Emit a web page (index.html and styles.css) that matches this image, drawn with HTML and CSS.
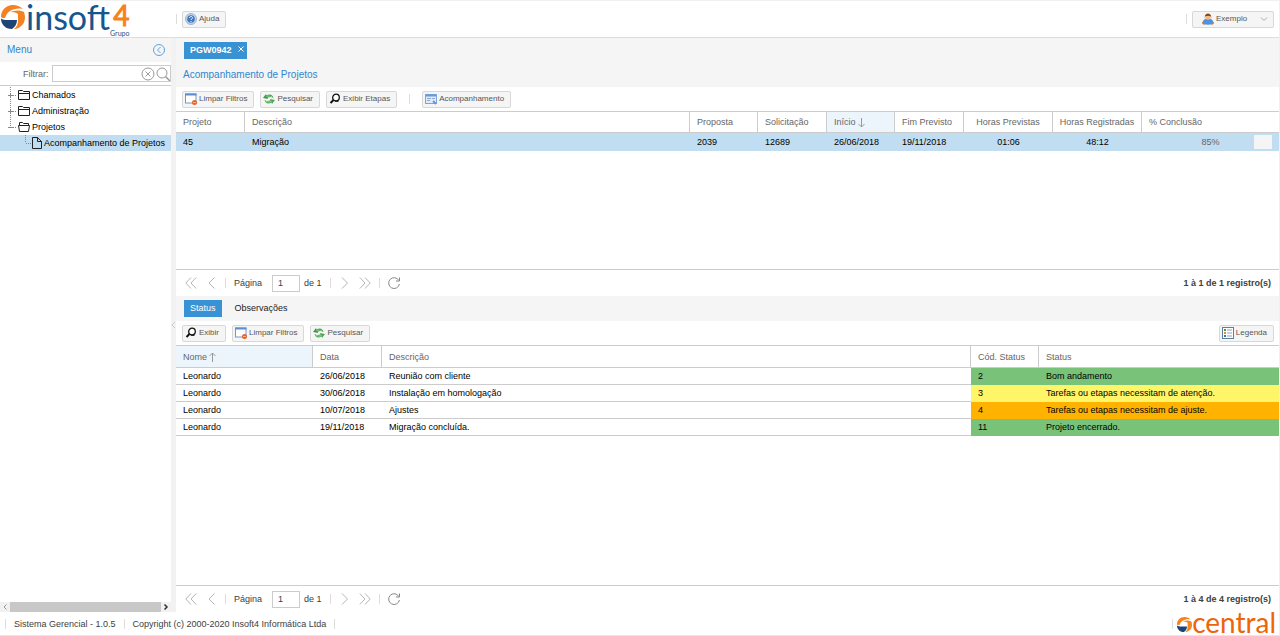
FILE: index.html
```html
<!DOCTYPE html>
<html lang="pt-BR">

<head>
    <meta charset="UTF-8">
    <meta name="viewport" content="width=device-width, initial-scale=1.0">
    <title>Sistema Gerencial</title>
    <link rel="stylesheet" href="styles.css">
</head>

<body>
    <!-- icons -->
    <svg class="sprite" aria-hidden="true">
        <symbol id="ball" viewBox="0 0 24 24">
            <path d="M0 12C0 5 5 0 12 0c4 0 8 2 10 4-5-1-10 0-13 2-3 2-4 4-5 7-2 0-3 0-4-1z" fill="#f58220" />
            <path d="M9 7c5-2 10-2 14 0 2 6 1 12-4 15-2 1.500-4 2-6 2 3-2 4-5 4-9V9C14 7 12 7 9 7z" fill="#f58220" />
            <path d="M0 13.500c1 1 3 1 4 1.500h12c0 4-2 7-5 9C4 24 0 19 0 13.500z" fill="#1c4477" />
        </symbol>
        <symbol id="help" viewBox="0 0 12 12">
            <circle cx="6" cy="6" r="5.500" fill="#c5d6ea" stroke="#9bb5d5" />
            <circle cx="6" cy="6" r="3.800" fill="#3f78bd" />
            <path d="M4.500 5c0-2 3-2 3-.2C7.500 6 6 5.800 6 7M6 8v1" fill="none" stroke="#fff" />
        </symbol>
        <symbol id="user" viewBox="0 0 12 12">
            <path d="M1 11c-1-3 1-5 3-5h4c2 0 4 2 3 5-3 1-7 1-10 0z" fill="#4d94e0" />
            <path d="M.5 9.500l2 1.500H1zM11.500 9.500l-2 1.500H11z" fill="#e59a52" stroke="#c97a35" />
            <circle cx="6" cy="4" r="2.800" fill="#f1b98a" />
            <path d="M2.800 5C2-1 10-1 9.200 5L8.500 3h-5z" fill="#8a4b1c" />
        </symbol>
        <symbol id="clear" viewBox="0 0 12 12">
            <rect x=".5" y="1" width="10.500" height="9" fill="#fff" stroke="#6b9bd6" />
            <path d="M0 1.500h11.500" stroke="#5b8fd2" stroke-width="2" />
            <circle cx="9.500" cy="9.500" r="2.500" fill="#e3662a" />
            <path d="M8 9.500h3" stroke="#fbd0b0" stroke-width=".7" />
        </symbol>
        <symbol id="refresh" viewBox="0 0 12 12">
            <path d="M0 5l3-4 .5 1.500C7 .5 9.500 1.500 10.500 5 8.500 3.800 6.500 3.800 4.500 4.800L5 6z" fill="#3f9a45" />
            <path d="M12 7l-3 4-.5-1.500C5 11.500 2.500 10.500 1.500 7c2 1.200 4 1.200 6 .2L7 6z" fill="#4fa855" />
            <path d="M3.500 3.500c2-.8 4-.6 5.500.2M8.500 8.500c-2 .8-4 .6-5.500-.2" fill="none" stroke="#a6dba6" stroke-width=".8" />
        </symbol>
        <symbol id="find" viewBox="0 0 12 12">
            <circle cx="7" cy="4.500" r="3.300" fill="#fff" stroke="#111" stroke-width="1.300" />
            <path d="M4.500 7L1.500 10" stroke="#111" stroke-width="2" />
            <path d="M6 8.300h3.500" stroke="#111" />
        </symbol>
        <symbol id="form" viewBox="0 0 12 12">
            <rect x=".5" y="1.500" width="11" height="9" fill="#dfeafa" stroke="#7fa5dc" />
            <path d="M1 2.500h10" stroke="#6b97d8" stroke-width="2" />
            <path d="M2 5.500h4M2 7.500h3M7 5.500h3" stroke="#8aa8d0" />
            <path d="M8 8l3 3" stroke="#6b97d8" stroke-width="2" />
        </symbol>
        <symbol id="legend" viewBox="0 0 12 12">
            <rect x=".5" y=".5" width="11" height="11" fill="#fff" stroke="#5d7f9e" />
            <path d="M5 3h5M5 6h5M5 9h5" stroke="#8fa3b5" />
            <path d="M2 3h2" stroke="#3d9a50" stroke-width="2" />
            <path d="M2 6h2" stroke="#e08b2d" stroke-width="2" />
            <path d="M2 9h2" stroke="#3c6fb5" stroke-width="2" />
        </symbol>
        <symbol id="folder" viewBox="0 0 12 10">
            <path d="M.5 9.500v-9h4l1 1h6v8zM.5 3.500h11" fill="none" stroke="#222" />
        </symbol>
        <symbol id="folder-open" viewBox="0 0 12 10">
            <path d="M1.500 3V.5h3l1 1h5V3M.5 3.500h11l-1 6h-9z" fill="none" stroke="#222" />
        </symbol>
        <symbol id="file" viewBox="0 0 10 12">
            <path d="M.5.5h5l4 4v7h-9zM5.500.5v4h4" fill="none" stroke="#222" />
        </symbol>
        <symbol id="first" viewBox="0 0 12 12">
            <path d="M6 .5L.8 6 6 11.500M11.200.5L6 6l5.200 5.500" fill="none" stroke="#b5b5b5" />
        </symbol>
        <symbol id="prev" viewBox="0 0 12 12">
            <path d="M9.500 .5L4 6l5.500 5.500" fill="none" stroke="#b5b5b5" />
        </symbol>
        <symbol id="next" viewBox="0 0 12 12">
            <path d="M3 .5L8.500 6 3 11.500" fill="none" stroke="#b5b5b5" />
        </symbol>
        <symbol id="last" viewBox="0 0 12 12">
            <path d="M.8.5L6 6 .8 11.500M6 .5L11.200 6 6 11.500" fill="none" stroke="#b5b5b5" />
        </symbol>
        <symbol id="reload" viewBox="0 0 12 12">
            <path d="M10.800 3.500A5.400 5.400 0 1 0 11.400 7M11.500.5v3.500H8" fill="none" stroke="#888" />
        </symbol>
    </svg>

    <header class="topbar">
        <div class="logo">
            <svg class="logo-ball"><use href="#ball" /></svg>
            <span class="logo-name">insoft</span>
            <div class="logo-end">
                <span class="logo-four">4</span>
                <span class="logo-group">Grupo</span>
            </div>
        </div>
        <i class="sep"></i>
        <button class="btn" type="button"><svg class="icon"><use href="#help" /></svg>Ajuda</button>
        <i class="sep push"></i>
        <button class="btn btn-user" type="button">
            <svg class="icon"><use href="#user" /></svg>Exemplo
            <svg class="caret" viewBox="0 0 8 8"><path d="M1 2.500l3 3 3-3" fill="none" stroke="#aaa" /></svg>
        </button>
    </header>

    <div class="main">
        <aside class="sidebar">
            <div class="side-head">
                <h2>Menu</h2>
                <button class="collapse" type="button" aria-label="Recolher">
                    <svg viewBox="0 0 12 12"><circle cx="6" cy="6" r="5.500" fill="none" stroke="#5fa2dd" /><path d="M7.500 3L4.500 6l3 3" fill="none" stroke="#5fa2dd" /></svg>
                </button>
            </div>
            <div class="filter">
                <label for="filter">Filtrar:</label>
                <div class="filter-box">
                    <input id="filter" type="text">
                    <svg viewBox="0 0 14 14"><circle cx="7" cy="7" r="6" fill="none" stroke="#999" /><path d="M4.500 4.500l5 5M9.500 4.500l-5 5" stroke="#999" /></svg>
                    <svg viewBox="0 0 14 14"><circle cx="6" cy="6" r="5" fill="none" stroke="#999" /><path d="M9.500 9.500L14 14" stroke="#999" stroke-width="1.500" /></svg>
                </div>
            </div>
            <ul class="tree">
                <li><svg class="branch" viewBox="0 0 12 16"><path d="M5.500 0v16M6 8.500h6" stroke-dasharray="1 1" /><path d="M3 8.500h5M5.500 6v5" /></svg><svg class="folder"><use href="#folder" /></svg>Chamados</li>
                <li><svg class="branch" viewBox="0 0 12 16"><path d="M5.500 0v16M6 8.500h6" stroke-dasharray="1 1" /><path d="M3 8.500h5M5.500 6v5" /></svg><svg class="folder"><use href="#folder" /></svg>Administração</li>
                <li><svg class="branch" viewBox="0 0 12 16"><path d="M5.500 0v8M6 8.500h6" stroke-dasharray="1 1" /><path d="M3 8.500h5" /></svg><svg class="folder"><use href="#folder-open" /></svg>Projetos</li>
                <li class="child selected"><svg class="branch" viewBox="0 0 12 16"><path d="M5.500 0v8M6 8.500h6" stroke-dasharray="1 1" /></svg><svg class="file"><use href="#file" /></svg>Acompanhamento de Projetos</li>
            </ul>
            <div class="hscroll">
                <svg viewBox="0 0 10 10"><path d="M6.500 2.500L4 5l2.500 2.500" fill="none" stroke="#999" /></svg>
                <div class="thumb"></div>
                <svg viewBox="0 0 10 10"><path d="M3.500 2.500L6 5 3.500 7.500" fill="none" stroke="#333" stroke-width="1.500" /></svg>
            </div>
        </aside>

        <div class="splitter">
            <svg viewBox="0 0 5 8"><path d="M4 1L1 4l3 3" fill="none" stroke="#ccc" /></svg>
        </div>

        <main class="content">
            <section class="panel panel-top">
                <div class="tabs">
                    <button class="tab active closable" type="button">PGW0942
                        <svg viewBox="0 0 6 6"><path d="M.5.5l5 5M5.500.5l-5 5" stroke="#fff" /></svg>
                    </button>
                </div>
                <h1 class="title">Acompanhamento de Projetos</h1>
                <div class="toolbar">
                    <button class="btn" type="button"><svg class="icon"><use href="#clear" /></svg>Limpar Filtros</button>
                    <button class="btn" type="button"><svg class="icon"><use href="#refresh" /></svg>Pesquisar</button>
                    <button class="btn" type="button"><svg class="icon"><use href="#find" /></svg>Exibir Etapas</button>
                    <i class="sep wide"></i>
                    <button class="btn" type="button"><svg class="icon"><use href="#form" /></svg>Acompanhamento</button>
                </div>
                <div class="grid-wrap">
                    <table class="grid">
                        <colgroup>
                            <col class="c-md">
                            <col>
                            <col class="c-sm">
                            <col class="c-md">
                            <col class="c-sm">
                            <col class="c-md">
                            <col class="c-lg">
                            <col class="c-lg">
                            <col class="c-xl">
                        </colgroup>
                        <thead>
                            <tr>
                                <th>Projeto</th>
                                <th>Descrição</th>
                                <th>Proposta</th>
                                <th>Solicitação</th>
                                <th class="sorted">Início<svg viewBox="0 0 7 10"><path d="M3.500 0v9M.5 6l3 3 3-3" fill="none" stroke="#999" /></svg></th>
                                <th>Fim Previsto</th>
                                <th class="center">Horas Previstas</th>
                                <th class="center">Horas Registradas</th>
                                <th>% Conclusão</th>
                            </tr>
                        </thead>
                        <tbody>
                            <tr class="selected">
                                <td>45</td>
                                <td>Migração</td>
                                <td>2039</td>
                                <td>12689</td>
                                <td>26/06/2018</td>
                                <td>19/11/2018</td>
                                <td class="center">01:06</td>
                                <td class="center">48:12</td>
                                <td>
                                    <div class="progress">
                                        <div class="progress-bar" style="width: 85%"></div>
                                        <span class="progress-text">85%</span>
                                    </div>
                                </td>
                            </tr>
                        </tbody>
                    </table>
                </div>
                <div class="paging">
                    <button type="button" aria-label="Primeira"><svg><use href="#first" /></svg></button>
                    <button type="button" aria-label="Anterior"><svg><use href="#prev" /></svg></button>
                    <i class="sep"></i>
                    <label for="page1">Página</label>
                    <input id="page1" type="text" value="1">
                    <span>de 1</span>
                    <i class="sep"></i>
                    <button type="button" aria-label="Próxima"><svg><use href="#next" /></svg></button>
                    <button type="button" aria-label="Última"><svg><use href="#last" /></svg></button>
                    <i class="sep"></i>
                    <button type="button" aria-label="Atualizar"><svg><use href="#reload" /></svg></button>
                    <strong class="count">1 à 1 de 1 registro(s)</strong>
                </div>
            </section>

            <section class="panel panel-bottom">
                <div class="tabs">
                    <button class="tab active" type="button">Status</button>
                    <button class="tab" type="button">Observações</button>
                </div>
                <div class="toolbar">
                    <button class="btn" type="button"><svg class="icon"><use href="#find" /></svg>Exibir</button>
                    <button class="btn" type="button"><svg class="icon"><use href="#clear" /></svg>Limpar Filtros</button>
                    <button class="btn" type="button"><svg class="icon"><use href="#refresh" /></svg>Pesquisar</button>
                    <button class="btn push" type="button"><svg class="icon"><use href="#legend" /></svg>Legenda</button>
                </div>
                <div class="grid-wrap">
                    <table class="grid lines">
                        <colgroup>
                            <col class="c-xl">
                            <col class="c-md">
                            <col>
                            <col class="c-sm">
                            <col class="c-status">
                        </colgroup>
                        <thead>
                            <tr>
                                <th class="sorted">Nome<svg viewBox="0 0 7 10"><path d="M3.500 10V1M.5 4l3-3 3 3" fill="none" stroke="#999" /></svg></th>
                                <th>Data</th>
                                <th>Descrição</th>
                                <th>Cód. Status</th>
                                <th>Status</th>
                            </tr>
                        </thead>
                        <tbody>
                            <tr>
                                <td>Leonardo</td>
                                <td>26/06/2018</td>
                                <td>Reunião com cliente</td>
                                <td class="green">2</td>
                                <td class="green">Bom andamento</td>
                            </tr>
                            <tr>
                                <td>Leonardo</td>
                                <td>30/06/2018</td>
                                <td>Instalação em homologação</td>
                                <td class="yellow">3</td>
                                <td class="yellow">Tarefas ou etapas necessitam de atenção.</td>
                            </tr>
                            <tr>
                                <td>Leonardo</td>
                                <td>10/07/2018</td>
                                <td>Ajustes</td>
                                <td class="orange">4</td>
                                <td class="orange">Tarefas ou etapas necessitam de ajuste.</td>
                            </tr>
                            <tr>
                                <td>Leonardo</td>
                                <td>19/11/2018</td>
                                <td>Migração concluída.</td>
                                <td class="green">11</td>
                                <td class="green">Projeto encerrado.</td>
                            </tr>
                        </tbody>
                    </table>
                </div>
                <div class="paging">
                    <button type="button" aria-label="Primeira"><svg><use href="#first" /></svg></button>
                    <button type="button" aria-label="Anterior"><svg><use href="#prev" /></svg></button>
                    <i class="sep"></i>
                    <label for="page2">Página</label>
                    <input id="page2" type="text" value="1">
                    <span>de 1</span>
                    <i class="sep"></i>
                    <button type="button" aria-label="Próxima"><svg><use href="#next" /></svg></button>
                    <button type="button" aria-label="Última"><svg><use href="#last" /></svg></button>
                    <i class="sep"></i>
                    <button type="button" aria-label="Atualizar"><svg><use href="#reload" /></svg></button>
                    <strong class="count">1 à 4 de 4 registro(s)</strong>
                </div>
            </section>
        </main>
    </div>

    <footer class="footer">
        <i class="sep"></i>
        <span>Sistema Gerencial - 1.0.5</span>
        <i class="sep"></i>
        <span>Copyright (c) 2000-2020 Insoft4 Informática Ltda</span>
        <i class="sep"></i>
        <i class="sep push"></i>
        <div class="central">
            <svg><use href="#ball" /></svg>
            <span>central</span>
        </div>
    </footer>
</body>

</html>
```

FILE: styles.css
```css
* {
    box-sizing: border-box;
}

body {
    margin: 0;
    height: 100vh;
    display: flex;
    flex-direction: column;
    font: 9px/12px "Liberation Sans", Arial, sans-serif;
    color: #404040;
    background: #fff;
    border-top: 1px solid #f0f0f0;
    border-right: 1px solid #f0f0f0;
    border-bottom: 1px solid #e8e8e8;
}

button,
input {
    font: inherit;
    color: inherit;
}

button {
    border: 0;
    padding: 0;
    background: none;
    cursor: pointer;
}

svg {
    display: block;
    flex: none;
}

.sprite {
    position: absolute;
    width: 0;
    height: 0;
}

.sep {
    width: 1px;
    height: 10px;
    background: #ddd;
}

.push {
    margin-left: auto;
}

.btn {
    display: flex;
    align-items: center;
    height: 17px;
    padding: 0 6px 0 2px;
    border: 1px solid #d8d8d8;
    border-radius: 2px;
    background: #f5f5f5;
    color: #555;
    font-size: 8px;
    white-space: nowrap;
}

.icon {
    width: 12px;
    height: 12px;
    margin-right: 2px;
}

/* top bar */
.topbar {
    display: flex;
    align-items: center;
    flex: none;
    height: 37px;
    padding-right: 5px;
    border-bottom: 1px solid #ddd;
}

.topbar .sep + .btn {
    margin-left: 5px;
}

.logo {
    display: flex;
    width: 176px;
    height: 36px;
    font-family: Lato, sans-serif;
    color: #17568c;
}

.logo-ball {
    width: 24px;
    height: 24px;
    margin: 4px 1px 0;
}

.logo-name {
    font-size: 34px;
    line-height: 32px;
}

.logo-end {
    display: flex;
    flex-direction: column;
    align-items: flex-end;
}

.logo-four {
    font-size: 28px;
    line-height: 28px;
    color: #f58220;
    -webkit-text-stroke: 1px #f58220;
}

.logo-group {
    font-size: 7px;
    line-height: 8px;
}

.btn-user {
    width: 82px;
    padding: 0 5px 0 9px;
}

.caret {
    width: 8px;
    height: 8px;
    margin-left: auto;
}

/* side menu */
.main {
    display: flex;
    flex: 1;
    min-height: 0;
}

.sidebar {
    display: flex;
    flex-direction: column;
    width: 171px;
    flex: none;
}

.side-head {
    display: flex;
    align-items: center;
    justify-content: space-between;
    height: 24px;
    padding: 0 6px 0 7px;
    background: #f5f5f5;
}

.side-head h2,
.title {
    margin: 0;
    font-size: 10px;
    font-weight: normal;
    color: #2f86cf;
}

.collapse svg {
    width: 12px;
    height: 12px;
}

.filter {
    display: flex;
    align-items: center;
    height: 24px;
    padding-left: 23px;
    border-bottom: 1px solid #ccc;
    color: #666;
}

.filter-box {
    display: flex;
    align-items: center;
    flex: 1;
    min-width: 0;
    height: 17px;
    margin-left: 3px;
    border: 1px solid #ccc;
}

.filter-box input {
    flex: 1;
    min-width: 0;
    height: 15px;
    padding: 0 3px;
    border: 0;
}

.filter-box svg {
    width: 14px;
    height: 14px;
    margin-left: 1px;
}

.tree {
    flex: 1;
    margin: 0;
    padding: 1px 0 0;
    list-style: none;
    color: #000;
}

.tree li {
    display: flex;
    align-items: center;
    height: 16px;
    padding-left: 5px;
    white-space: nowrap;
}

.tree .child {
    padding-left: 20px;
}

.tree .selected {
    background: #c1ddf1;
}

.branch {
    width: 12px;
    height: 16px;
    fill: none;
    stroke: #888;
}

.folder {
    width: 12px;
    height: 10px;
    margin: 0 2px 0 1px;
}

.file {
    width: 10px;
    height: 12px;
    margin-right: 2px;
}

.hscroll {
    display: flex;
    align-items: center;
    height: 10px;
    background: #f1f1f1;
}

.hscroll svg {
    width: 10px;
    height: 10px;
}

.thumb {
    flex: 1;
    height: 10px;
    background: #c8c8c8;
}

.splitter {
    display: flex;
    align-items: center;
    width: 5px;
    flex: none;
    background: #f2f2f2;
}

.splitter svg {
    width: 5px;
    height: 8px;
}

/* content */
.content {
    display: flex;
    flex-direction: column;
    flex: 1;
    min-width: 0;
}

.panel {
    display: flex;
    flex-direction: column;
    min-height: 0;
}

.panel-top {
    flex: 45;
}

.panel-bottom {
    flex: 55;
}

.tabs {
    display: flex;
    align-items: center;
    gap: 7px;
    flex: none;
    height: 25px;
    padding-left: 8px;
    background: #f5f5f5;
}

.tab {
    display: flex;
    height: 17px;
    padding: 0 6px;
    line-height: 17px;
    color: #222;
}

.tab.active {
    background: #3892d4;
    color: #fff;
    font-weight: bold;
}

.panel-bottom .tab {
    font-weight: normal;
}

.closable {
    padding-right: 3px;
}

.closable svg {
    width: 6px;
    height: 6px;
    margin: 4px 0 0 6px;
}

.title {
    height: 24px;
    padding-left: 7px;
    line-height: 24px;
    background: #f5f5f5;
}

.toolbar {
    display: flex;
    align-items: center;
    gap: 6px;
    flex: none;
    height: 24px;
    padding: 0 5px 0 6px;
}

.sep.wide {
    margin: 0 6px;
}

.grid-wrap {
    flex: 1;
    min-height: 0;
    border-top: 1px solid #ccc;
    border-bottom: 1px solid #ccc;
}

.grid {
    width: 100%;
    table-layout: fixed;
    border-collapse: separate;
    border-spacing: 0;
}

.c-sm {
    width: 68px;
}

.c-md {
    width: 69px;
}

.c-lg {
    width: 89px;
}

.c-xl {
    width: 137px;
}

.c-status {
    width: 240px;
}

.grid th,
.grid td {
    padding: 0 7px;
    text-align: left;
    white-space: nowrap;
}

.grid th {
    height: 21px;
    font-weight: normal;
    color: #666;
    border-right: 1px solid #ccc;
    border-bottom: 1px solid #ccc;
}

.grid th:last-child {
    border-right: 0;
}

.grid th.sorted {
    background: #ecf5fc;
}

.grid th svg {
    display: inline-block;
    width: 7px;
    height: 10px;
    margin-left: 2px;
    vertical-align: middle;
}

.grid td {
    height: 18px;
    color: #000;
}

.grid .center {
    padding: 0;
    text-align: center;
}

.grid .selected td {
    background: #c1ddf1;
}

.lines th {
    height: 22px;
}

.lines td {
    height: 17px;
    border-bottom: 1px solid #ccc;
}

.lines .green {
    background: #79c279;
    border-color: #79c279;
}

.lines .yellow {
    background: #fff568;
    border-color: #fff568;
}

.lines .orange {
    background: #ffb300;
    border-color: #ffb300;
}

.progress {
    position: relative;
    height: 14px;
    background: #f5f5f5;
}

.progress-bar {
    height: 14px;
    background: #c1ddf1;
}

.progress-text {
    position: absolute;
    inset: 0;
    line-height: 14px;
    text-align: center;
    color: #666;
}

/* paging */
.paging {
    display: flex;
    align-items: center;
    gap: 8px;
    flex: none;
    height: 26px;
    padding: 0 8px 0 9px;
}

.paging svg {
    width: 12px;
    height: 12px;
}

.paging input {
    width: 28px;
    height: 17px;
    margin: 0 -4px 0 2px;
    padding: 0 5px;
    border: 1px solid #ccc;
}

.count {
    margin-left: auto;
}

/* footer */
.footer {
    display: flex;
    align-items: center;
    gap: 8px;
    flex: none;
    height: 23px;
    padding: 0 3px 0 5px;
}

.footer .push {
    margin-right: -4px;
}

.central {
    display: flex;
    align-items: center;
    padding-bottom: 4px;
    font: 28px/18px Lato, sans-serif;
    color: #ec6608;
}

.central svg {
    width: 15px;
    height: 15px;
    margin-top: 5px;
}
```
